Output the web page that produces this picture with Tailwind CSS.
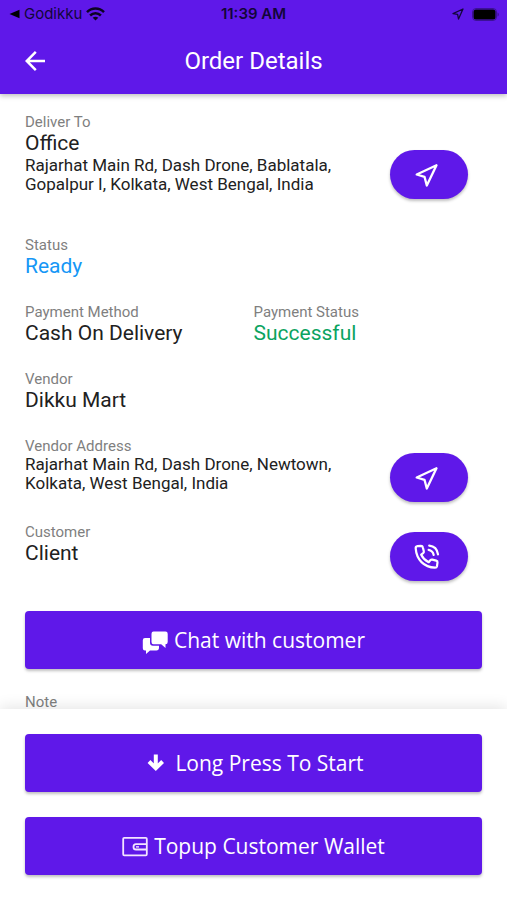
<!DOCTYPE html>
<html lang="en">
<head>
<meta charset="utf-8">
<meta name="viewport" content="width=device-width, initial-scale=1">
<title>Order Details</title>
<script src="https://cdn.jsdelivr.net/npm/@tailwindcss/browser@4"></script>
</head>
<body class="flex h-screen flex-col bg-white font-['Roboto',sans-serif] text-[#212121]">
  <header class="relative z-10 bg-[#5f18e9] shadow-[0_2px_5px_rgba(0,0,0,0.25)]">
    <div class="grid h-7 grid-cols-[1fr_auto_1fr] items-center px-2 text-[#12063a]">
      <a href="#" class="flex items-center gap-1 font-['Inter',sans-serif] text-[15px] leading-5">
        <svg class="h-3 w-3" viewBox="0 0 12 12" fill="#000" aria-hidden="true"><path d="M1.500 6 11.500 1.800V10.200Z"/></svg>
        <span>Godikku</span>
        <svg class="h-[14px] w-[19px]" viewBox="0 0 19 14" fill="none" stroke="#0b0322" stroke-width="2.500" aria-label="Wi-Fi"><path d="M1 5.200C5.800.400 13.200.400 18 5.200"/><path d="M4.100 8.500C7.200 5.500 11.800 5.500 14.900 8.500"/><path d="M9.500 13.600 6.700 10.800C8.300 9.400 10.700 9.400 12.300 10.800Z" fill="#0b0322" stroke="none"/></svg>
      </a>
      <time class="font-['Inter',sans-serif] text-[15px] leading-5 font-semibold">11:39 AM</time>
      <div class="flex items-center justify-end gap-2">
        <svg class="h-3 w-3" viewBox="0 0 12 12" fill="none" stroke="#12063a" stroke-width="1.300" stroke-linejoin="round" aria-hidden="true"><path d="M11 1 1 5.600 5.600 6.400 6.500 11Z"/></svg>
        <svg class="h-[13px] w-[27px]" viewBox="0 0 27 13" aria-label="Battery full"><rect x=".500" y=".500" width="24" height="12" rx="3.500" fill="none" stroke="#3c1196"/><rect x="1.500" y="1.500" width="22" height="10" rx="2.500" fill="#000"/><path d="M25.500 4.500C27.300 5.300 27.300 7.700 25.500 8.500Z" fill="#3c1196"/></svg>
      </div>
    </div>
    <div class="grid h-[66px] grid-cols-[1fr_auto_1fr] items-center px-[25px]">
      <button type="button" aria-label="Back" class="w-5">
        <svg class="h-5 w-5" viewBox="0 0 20 20" fill="none" stroke="#fff" stroke-width="2.500" aria-hidden="true"><path d="M20 10H2M10.800.900 1.700 10 10.800 19.100"/></svg>
      </button>
      <h1 class="text-[24px] leading-7 text-white">Order Details</h1>
    </div>
  </header>

  <main class="min-h-0 flex-1 overflow-y-auto px-[25px] pt-[19px] [scrollbar-width:none]">
    <section class="flex items-end justify-between pr-[14px]">
      <div class="pb-[17px]">
        <h2 class="text-[15px] leading-[18px] text-[#7f7f7f]">Deliver To</h2>
        <p class="text-[21px] leading-6">Office</p>
        <p class="mt-px max-w-[330px] text-[17px] leading-[19px]">Rajarhat Main Rd, Dash Drone, Bablatala, Gopalpur I, Kolkata, West Bengal, India</p>
      </div>
      <button type="button" aria-label="Navigate to delivery address" class="mb-3 flex h-[49px] w-[78px] shrink-0 items-center justify-center rounded-full bg-[#5f18e9] pr-1 shadow-[0_2px_3px_rgba(0,0,0,0.25)]">
        <svg class="h-6 w-6" viewBox="0 0 24 24" fill="none" stroke="#fff" stroke-width="2.300" stroke-linejoin="round" aria-hidden="true"><path d="M21.500 2.200 1.700 11.500 9.500 13.800 11.800 22.500Z"/></svg>
      </button>
    </section>

    <section class="mt-[25px]">
      <h2 class="text-[15px] leading-[18px] text-[#7f7f7f]">Status</h2>
      <p class="text-[21px] leading-6 text-[#1697f6]">Ready</p>
    </section>

    <div class="mt-[25px] grid grid-cols-2">
      <section>
        <h2 class="text-[15px] leading-[18px] text-[#7f7f7f]">Payment Method</h2>
        <p class="text-[21px] leading-6">Cash On Delivery</p>
      </section>
      <section>
        <h2 class="text-[15px] leading-[18px] text-[#7f7f7f]">Payment Status</h2>
        <p class="text-[21px] leading-6 text-[#0ba360]">Successful</p>
      </section>
    </div>

    <section class="mt-[25px]">
      <h2 class="text-[15px] leading-[18px] text-[#7f7f7f]">Vendor</h2>
      <p class="text-[21px] leading-6">Dikku Mart</p>
    </section>

    <section class="mt-[25px] flex items-end justify-between pr-[14px]">
      <div class="pb-[9px]">
        <h2 class="text-[15px] leading-[18px] text-[#7f7f7f]">Vendor Address</h2>
        <p class="max-w-[330px] text-[17px] leading-[19px]">Rajarhat Main Rd, Dash Drone, Newtown, Kolkata, West Bengal, India</p>
      </div>
      <button type="button" aria-label="Navigate to vendor address" class="flex h-[49px] w-[78px] shrink-0 items-center justify-center rounded-full bg-[#5f18e9] pr-1 shadow-[0_2px_3px_rgba(0,0,0,0.25)]">
        <svg class="h-6 w-6" viewBox="0 0 24 24" fill="none" stroke="#fff" stroke-width="2.300" stroke-linejoin="round" aria-hidden="true"><path d="M21.500 2.200 1.700 11.500 9.500 13.800 11.800 22.500Z"/></svg>
      </button>
    </section>

    <section class="mt-[21px] flex items-end justify-between pr-[14px]">
      <div class="pb-4">
        <h2 class="text-[15px] leading-[18px] text-[#7f7f7f]">Customer</h2>
        <p class="text-[21px] leading-6">Client</p>
      </div>
      <button type="button" aria-label="Call customer" class="flex h-[49px] w-[78px] shrink-0 items-center justify-center rounded-full bg-[#5f18e9] pr-1 shadow-[0_2px_3px_rgba(0,0,0,0.25)]">
        <svg class="h-[26px] w-[26px]" viewBox="0 0 26 26" fill="none" stroke="#fff" stroke-width="2.200" stroke-linecap="round" stroke-linejoin="round" aria-hidden="true"><path d="M3.500 2.200 7 1.900C8 1.900 8.600 2.400 8.800 3.300L9.800 7.200C10 8.100 9.700 8.700 9.100 9.200L7.200 10.700C8.800 14 11.200 16.500 14.700 18.200L16.300 16.200C16.900 15.600 17.500 15.400 18.300 15.600L22.200 16.600C23.200 16.900 23.600 17.500 23.500 18.400L23 22.200C22.800 23.200 22.100 23.700 21 23.700C10 23.200 2.500 15.700 1.700 4.400C1.600 3.200 2.300 2.400 3.500 2.200Z"/><path d="M15.200 1.700C20 2.200 23.300 5.500 24 10.400M14.600 5.900C17.400 6.400 19 8.100 19.700 10.900"/></svg>
      </button>
    </section>

    <button type="button" class="mt-[30px] flex h-[58px] w-full items-center justify-center gap-[6px] rounded bg-[#5f18e9] font-['Open_Sans',sans-serif] text-[21px] leading-7 text-white shadow-[0_2px_3px_rgba(0,0,0,0.25)]">
      <svg class="mt-1 h-[25px] w-[26px]" viewBox="0 0 26 25" fill="#fff" aria-hidden="true"><path d="M11.500 1.500H23.500Q25.700 1.500 25.700 3.700V12Q25.700 14.200 23.500 14.200V18L19.200 14.200H11.500Q9.500 14.200 9.500 12V3.700Q9.500 1.500 11.500 1.500Z"/><path d="M8 8H3Q.800 8 .800 10.200V18.200Q.800 20.400 3 20.400H4V24L8 20.400H14.500Q16.700 20.400 17 18.200V15.700H11Q8 15.700 8 12.700Z"/></svg>
      Chat with customer
    </button>

    <section class="mt-6">
      <h2 class="text-[15px] leading-[18px] text-[#7f7f7f]">Note</h2>
    </section>
  </main>

  <footer class="relative z-10 flex flex-col gap-[25px] bg-white px-[25px] py-[25px] shadow-[0_-2px_14px_rgba(0,0,0,0.11)]">
    <button type="button" class="flex h-[58px] items-center justify-center gap-[6px] rounded bg-[#5f18e9] font-['Open_Sans',sans-serif] text-[21px] leading-7 text-white shadow-[0_2px_3px_rgba(0,0,0,0.25)]">
      <svg class="h-[26px] w-[26px]" viewBox="0 0 26 26" fill="none" stroke="#fff" stroke-width="4" aria-hidden="true"><path d="M12.800 4.500V18M6 11.500 12.800 18.200 19.600 11.500"/></svg>
      Long Press To Start
    </button>
    <button type="button" class="flex h-[58px] items-center justify-center gap-[6px] rounded bg-[#5f18e9] font-['Open_Sans',sans-serif] text-[21px] leading-7 text-white shadow-[0_2px_3px_rgba(0,0,0,0.25)]">
      <svg class="h-[26px] w-[26px]" viewBox="0 0 26 26" fill="none" stroke="#f3e4ff" stroke-width="1.800" aria-hidden="true"><rect x="1.200" y="4.800" width="23.600" height="17.500" rx="1"/><path d="M24.800 11.200H14Q11.500 11.200 11.500 13.900Q11.500 16.500 14 16.500H24.800"/><path d="M14 13.900H17" stroke-width="1.400"/></svg>
      Topup Customer Wallet
    </button>
  </footer>
</body>
</html>
